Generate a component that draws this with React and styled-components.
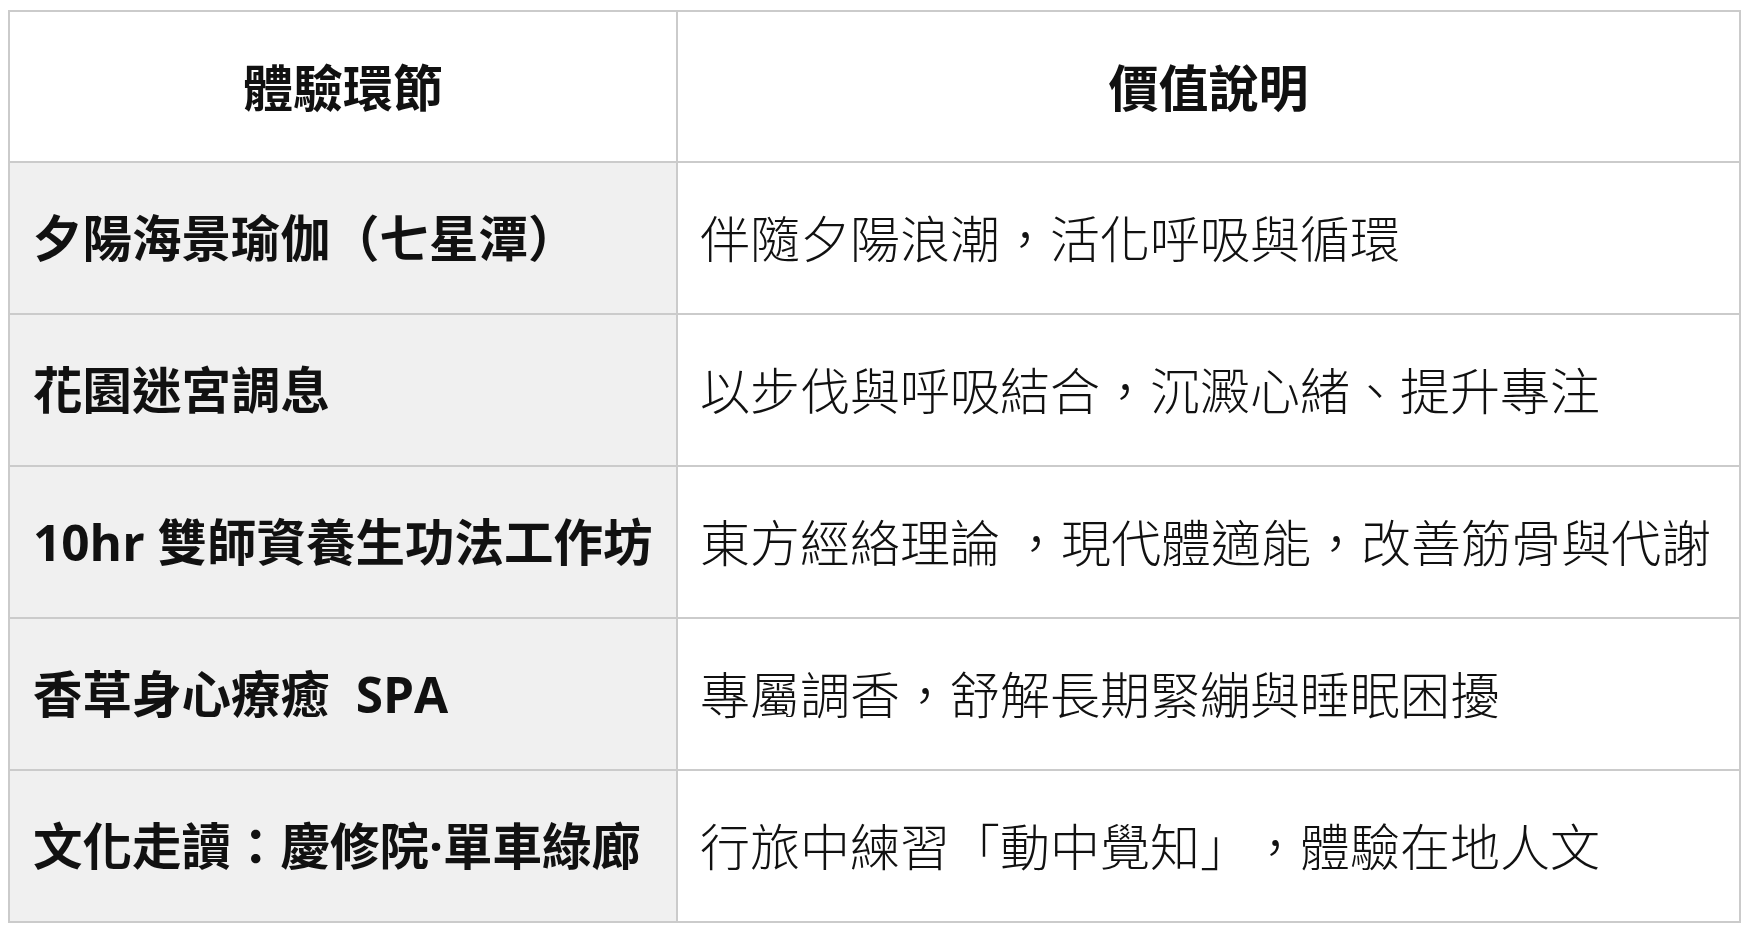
import React from "react";
import styled, { createGlobalStyle } from "styled-components";

const rows = [
  ["夕陽海景瑜伽（七星潭）", "伴隨夕陽浪潮，活化呼吸與循環"],
  ["花園迷宮調息", "以步伐與呼吸結合，沉澱心緒、提升專注"],
  ["10hr 雙師資養生功法工作坊", "東方經絡理論 ，現代體適能，改善筋骨與代謝"],
  ["香草身心療癒  SPA", "專屬調香，舒解長期緊繃與睡眠困擾"],
  ["文化走讀：慶修院·單車綠廊", "行旅中練習「動中覺知」，體驗在地人文"],
];

export default function App() {
  return (
    <>
      <GlobalStyle />
      <Page lang="zh-Hant-TW">
        <Table>
          <colgroup>
            <col style={{ width: 668 }} />
            <col />
          </colgroup>
          <thead>
            <tr>
              <HeadCell>體驗環節</HeadCell>
              <HeadCell>價值說明</HeadCell>
            </tr>
          </thead>
          <tbody>
            {rows.map(([name, value], index) => (
              <tr key={index}>
                <NameCell>{name}</NameCell>
                <ValueCell>{value}</ValueCell>
              </tr>
            ))}
          </tbody>
        </Table>
      </Page>
    </>
  );
}

const GlobalStyle = createGlobalStyle`
  html, body {
    margin: 0;
    background: #fff;
  }
`;

const Page = styled.div`
  padding: 10px 4px 0 8px;
  font-family: "Open Sans", "Noto Sans CJK TC", sans-serif;
  color: #111;
  text-spacing-trim: space-all;
`;

const Table = styled.table`
  width: 1733px;
  border-collapse: collapse;
  table-layout: fixed;

  td, th {
    border: 2px solid #cbcbcb;
  }
`;

const HeadCell = styled.th`
  height: 145px;
  padding: 0 0 4px;
  background: #fff;
  font-family: "Noto Sans CJK TC", sans-serif;
  font-size: 50px;
  font-weight: 700;
  text-align: center;
  vertical-align: middle;
`;

const NameCell = styled.td`
  height: 146px;
  padding: 0 0 4px 23px;
  background: #f0f0f0;
  font-size: 49.5px;
  font-weight: 700;
  white-space: pre;
  vertical-align: middle;
`;

const ValueCell = styled.td`
  height: 146px;
  padding: 0 0 4px 22px;
  background: #fff;
  font-family: "Noto Sans CJK TC", sans-serif;
  font-size: 50px;
  font-weight: 300;
  white-space: pre;
  vertical-align: middle;
`;
